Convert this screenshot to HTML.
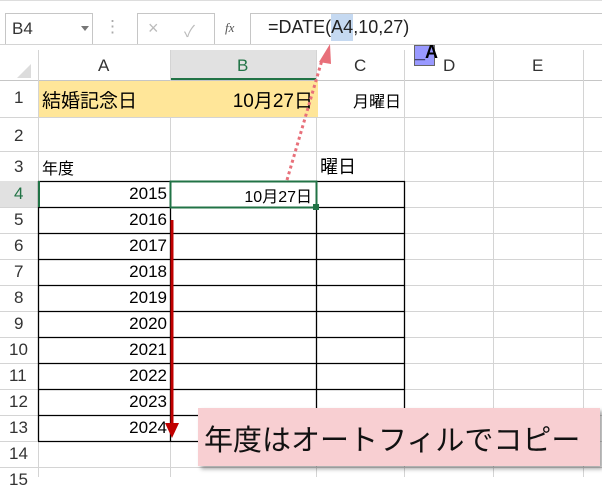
<!DOCTYPE html><html><head><meta charset="utf-8"><style>
body{margin:0;width:602px;height:477px;overflow:hidden;background:#fff;font-family:"Liberation Sans","Noto Sans CJK JP",sans-serif;position:relative}
.a{position:absolute}
.t{position:absolute;font-size:17px;color:#000;white-space:nowrap}
.r{position:absolute;font-size:17px;color:#000;white-space:nowrap;text-align:right}
</style></head><body>
<div class="a" style="left:0;top:0;width:602px;height:44px;background:#fff;border-top:1px solid #ddd"></div>
<div class="a" style="left:5px;top:13px;width:86px;height:30px;border:1px solid #c6c6c6"></div>
<div class="t" style="left:12px;top:19px;font-size:17px;color:#333">B4</div>
<div class="a" style="left:81px;top:26px;border:4px solid transparent;border-top:5px solid #777"></div>
<div class="t" style="left:104px;top:17px;color:#aaa">⋮</div>
<div class="a" style="left:137px;top:13px;width:76px;height:30px;border:1px solid #c6c6c6"></div>
<div class="t" style="left:148px;top:18px;color:#bbb;font-size:18px">×</div>
<div class="t" style="left:184px;top:18px;color:#bbb;font-size:16px">✓</div>
<div class="t" style="left:225px;top:20px;color:#555;font-size:13px;font-style:italic;font-family:'Liberation Serif',serif">fx</div>
<div class="a" style="left:250px;top:13px;width:360px;height:30px;border:1px solid #c6c6c6"></div>
<div class="a" style="left:331px;top:14px;width:22px;height:27px;background:#c5d9f1"></div>
<div class="t" style="left:268px;top:17px;font-size:18px;color:#222">=DATE(A4,10,27)</div>
<div class="a" style="left:0;top:44px;width:602px;height:1px;background:#d4d4d4"></div>
<div class="a" style="left:0;top:50px;width:602px;height:30px;background:#fff;border-bottom:1px solid #c6c6c6"></div>
<div class="a" style="left:17px;top:64px;border-left:14px solid transparent;border-bottom:14px solid #dcdcdc"></div>
<div class="a" style="left:170px;top:50px;width:146px;height:28px;background:#e1e1e1;border-bottom:2px solid #217346"></div>
<div class="t" style="left:98px;top:56px;color:#333">A</div>
<div class="t" style="left:237px;top:56px;color:#217346">B</div>
<div class="t" style="left:354px;top:56px;color:#333">C</div>
<div class="t" style="left:443px;top:56px;color:#333">D</div>
<div class="t" style="left:532px;top:56px;color:#333">E</div>
<div class="a" style="left:414px;top:45px;width:19px;height:19px;background:#9999ff;border:1px solid #666"></div>
<div class="t" style="left:415px;top:42px;font-weight:bold;font-size:18px;font-family:'Liberation Sans Narrow','Liberation Sans',sans-serif">_A</div>
<svg class="a" style="left:0;top:50px" width="602" height="427">
<g stroke="#d4d4d4" stroke-width="1">
<line x1="38.5" y1="0" x2="38.5" y2="427"/><line x1="170.5" y1="0" x2="170.5" y2="427"/><line x1="316.5" y1="0" x2="316.5" y2="427"/><line x1="404.5" y1="0" x2="404.5" y2="427"/><line x1="493.5" y1="0" x2="493.5" y2="427"/><line x1="583.5" y1="0" x2="583.5" y2="427"/>
<line x1="0" y1="67.5" x2="602" y2="67.5"/><line x1="0" y1="101.5" x2="602" y2="101.5"/><line x1="0" y1="131.5" x2="602" y2="131.5"/>
<line x1="0" y1="157.5" x2="602" y2="157.5"/><line x1="0" y1="183.5" x2="602" y2="183.5"/><line x1="0" y1="209.5" x2="602" y2="209.5"/><line x1="0" y1="235.5" x2="602" y2="235.5"/><line x1="0" y1="261.5" x2="602" y2="261.5"/><line x1="0" y1="287.5" x2="602" y2="287.5"/><line x1="0" y1="313.5" x2="602" y2="313.5"/><line x1="0" y1="339.5" x2="602" y2="339.5"/><line x1="0" y1="365.5" x2="602" y2="365.5"/><line x1="0" y1="391.5" x2="602" y2="391.5"/><line x1="0" y1="417.5" x2="602" y2="417.5"/>
</g>
</svg>
<div class="a" style="left:0;top:181px;width:38px;height:26px;background:#e1e1e1"></div>
<div class="a" style="left:39px;top:81px;width:279px;height:36px;background:#ffe699"></div>
<svg class="a" style="left:0;top:50px" width="602" height="427">
<g stroke="#000" stroke-width="1.3">
<line x1="38.5" y1="131" x2="38.5" y2="391"/><line x1="170.5" y1="131" x2="170.5" y2="391"/><line x1="316.5" y1="131" x2="316.5" y2="391"/><line x1="404.5" y1="131" x2="404.5" y2="391"/>
<line x1="38" y1="131.5" x2="405" y2="131.5"/><line x1="38" y1="157.5" x2="405" y2="157.5"/><line x1="38" y1="183.5" x2="405" y2="183.5"/><line x1="38" y1="209.5" x2="405" y2="209.5"/><line x1="38" y1="235.5" x2="405" y2="235.5"/><line x1="38" y1="261.5" x2="405" y2="261.5"/><line x1="38" y1="287.5" x2="405" y2="287.5"/><line x1="38" y1="313.5" x2="405" y2="313.5"/><line x1="38" y1="339.5" x2="405" y2="339.5"/><line x1="38" y1="365.5" x2="405" y2="365.5"/><line x1="38" y1="391.5" x2="405" y2="391.5"/>
</g>
<line x1="39" y1="131" x2="39" y2="157" stroke="#217346" stroke-width="2"/>
<rect x="170.5" y="131.5" width="146" height="26" fill="none" stroke="#217346" stroke-width="2"/>
<rect x="313" y="154" width="6" height="6" fill="#217346"/>
</svg>
<div class="t" style="left:14px;top:88px;color:#333">1</div>
<div class="t" style="left:14px;top:126px;color:#333">2</div>
<div class="t" style="left:14px;top:157px;color:#333">3</div>
<div class="t" style="left:14px;top:184px;color:#217346">4</div>
<div class="t" style="left:14px;top:210px;color:#333">5</div>
<div class="t" style="left:14px;top:236px;color:#333">6</div>
<div class="t" style="left:14px;top:262px;color:#333">7</div>
<div class="t" style="left:14px;top:288px;color:#333">8</div>
<div class="t" style="left:14px;top:314px;color:#333">9</div>
<div class="t" style="left:9px;top:340px;color:#333">10</div>
<div class="t" style="left:9px;top:366px;color:#333">11</div>
<div class="t" style="left:9px;top:392px;color:#333">12</div>
<div class="t" style="left:9px;top:418px;color:#333">13</div>
<div class="t" style="left:9px;top:444px;color:#333">14</div>
<div class="t" style="left:9px;top:470px;color:#333">15</div>
<div class="t" style="left:42px;top:86px;font-size:19px">結婚記念日</div>
<div class="r" style="left:180px;width:133px;top:86px;font-size:19px">10月27日</div>
<div class="r" style="left:320px;width:81px;top:88px;font-size:16px">月曜日</div>
<div class="t" style="left:42px;top:155px;font-size:16px">年度</div>
<div class="t" style="left:320px;top:153px;font-size:18px">曜日</div>
<div class="r" style="left:180px;width:132px;top:183px;font-size:16px">10月27日</div>
<div class="r" style="left:60px;width:107px;top:184px">2015</div>
<div class="r" style="left:60px;width:107px;top:210px">2016</div>
<div class="r" style="left:60px;width:107px;top:236px">2017</div>
<div class="r" style="left:60px;width:107px;top:262px">2018</div>
<div class="r" style="left:60px;width:107px;top:288px">2019</div>
<div class="r" style="left:60px;width:107px;top:314px">2020</div>
<div class="r" style="left:60px;width:107px;top:340px">2021</div>
<div class="r" style="left:60px;width:107px;top:366px">2022</div>
<div class="r" style="left:60px;width:107px;top:392px">2023</div>
<div class="r" style="left:60px;width:107px;top:418px">2024</div>
<svg class="a" style="left:0;top:0" width="602" height="477">
<line x1="287" y1="180" x2="322" y2="60" stroke="#e8707a" stroke-width="3" stroke-dasharray="3,3"/>
<polygon points="330,44 319,62 331,64" fill="#e8707a"/>
<line x1="172" y1="220" x2="172" y2="425" stroke="#c00000" stroke-width="3"/>
<polygon points="165,423 179,423 172,438" fill="#c00000"/>
</svg>
<div class="a" style="left:198px;top:408px;width:402px;height:58px;background:#f8cfd2;box-shadow:3px 3px 4px rgba(0,0,0,.35)"></div>
<div class="t" style="left:204px;top:417px;font-size:29px;color:#111">年度はオートフィルでコピー</div>
</body></html>
